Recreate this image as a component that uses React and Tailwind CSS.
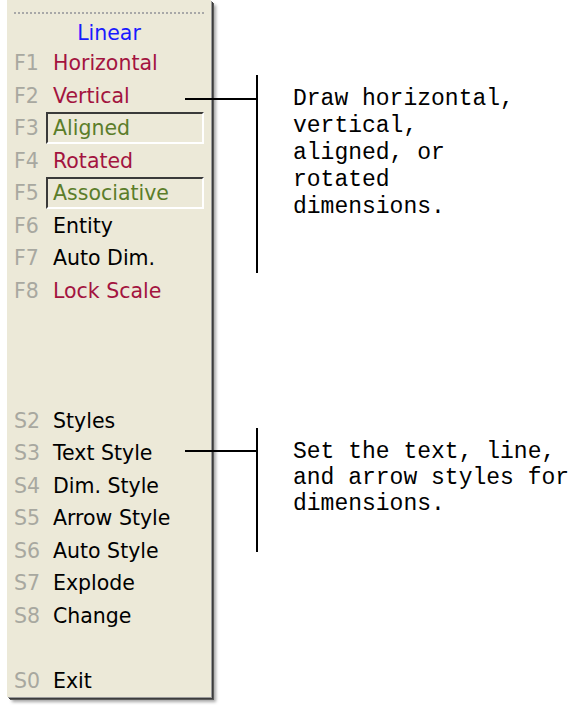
import React from 'react';

const menuFont = { fontFamily: '"DejaVu Sans", Verdana, sans-serif' };

// key, label, colour, boxed
const rows = [
  ['F1', 'Horizontal', 'text-[#a3143f]'],
  ['F2', 'Vertical', 'text-[#a3143f]'],
  ['F3', 'Aligned', 'text-[#5b7d2a]', true],
  ['F4', 'Rotated', 'text-[#a3143f]'],
  ['F5', 'Associative', 'text-[#5b7d2a]', true],
  ['F6', 'Entity', 'text-black'],
  ['F7', 'Auto Dim.', 'text-black'],
  ['F8', 'Lock Scale', 'text-[#a3143f]'],
  null,
  null,
  null,
  ['S2', 'Styles', 'text-black'],
  ['S3', 'Text Style', 'text-black'],
  ['S4', 'Dim. Style', 'text-black'],
  ['S5', 'Arrow Style', 'text-black'],
  ['S6', 'Auto Style', 'text-black'],
  ['S7', 'Explode', 'text-black'],
  ['S8', 'Change', 'text-black'],
  null,
  ['S0', 'Exit', 'text-black'],
];

const MenuRow = ({ row }) => {
  if (!row) return <div className="h-[32.5px]" />;
  const [key, label, color, boxed] = row;
  return (
    <div className="h-[32.5px] flex items-center pl-[7px] pr-[7px]">
      <span className={`${boxed ? 'w-[32px]' : 'w-[39px]'} shrink-0 text-[#a8a8a0]`}>{key}</span>
      {boxed ? (
        <div className="flex-1 h-[32px] flex items-center pl-[5px] border-t-2 border-l-2 border-b-2 border-r-2 border-t-[#3a3a3a] border-l-[#3a3a3a] border-b-white border-r-white">
          <span className={color}>{label}</span>
        </div>
      ) : (
        <span className={color}>{label}</span>
      )}
    </div>
  );
};

const Callout = ({ top, lineY, vTop, vBottom, lines, lh }) => (
  <>
    <div className="absolute left-[185px] h-[2px] w-[73px] bg-black" style={{ top: lineY }} />
    <div className="absolute left-[256px] w-[2px] bg-black" style={{ top: vTop, height: vBottom - vTop }} />
    <div
      className="absolute left-[293px] text-[23px] text-black whitespace-pre"
      style={{ top, lineHeight: lh, fontFamily: '"Liberation Mono", "Courier New", monospace' }}
    >
      {lines.join('\n')}
    </div>
  </>
);

export default function App() {
  return (
    <div className="relative w-[581px] h-[705px] bg-white overflow-hidden">
      <div
        className="ml-[7px] w-[204px] h-[697px] bg-[#ece9d8] flex flex-col text-[20.5px] leading-none shadow-[1px_1px_0_#9a9a9a,2px_2px_0_#3c3c3c,3px_3px_0_#5a5a5a,5px_5px_3px_rgba(0,0,0,0.35)]"
        style={menuFont}
      >
        <div className="mt-[12px] mx-[7px] border-t-2 border-dotted border-[#a8a8a8]" />
        <div className="mt-[6px] h-[27px] flex items-center justify-center text-[#1a1aff]">Linear</div>
        {rows.map((row, i) => (
          <MenuRow key={i} row={row} />
        ))}
      </div>

      <Callout
        top={86}
        lineY={98}
        vTop={75}
        vBottom={273}
        lh="27px"
        lines={['Draw horizontal,', 'vertical,', 'aligned, or', 'rotated', 'dimensions.']}
      />
      <Callout
        top={439}
        lineY={450}
        vTop={428}
        vBottom={552}
        lh="26px"
        lines={['Set the text, line,', 'and arrow styles for', 'dimensions.']}
      />
    </div>
  );
}
